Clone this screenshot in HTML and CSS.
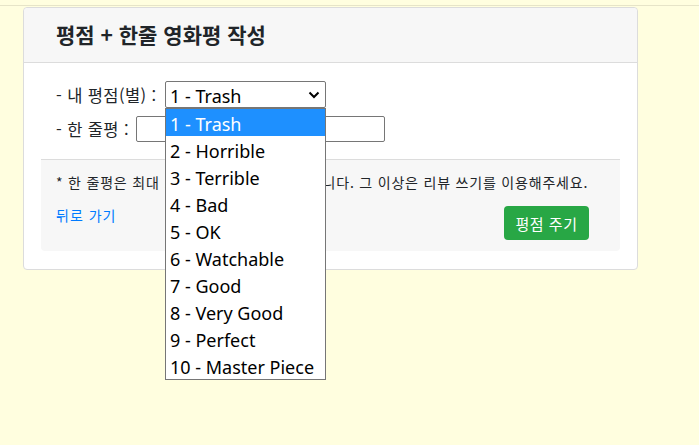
FILE: index.html
```html
<!DOCTYPE html>
<html lang="ko">
<head>
<meta charset="utf-8">
<link rel="stylesheet" href="styles.css">
</head>
<body>
<div class="topline"></div>
<div class="card">
  <div class="card-header">평점 + 한줄 영화평 작성</div>
  <div class="card-body">
    <div class="row">
      <span class="label label1">- 내 평점(별) :</span>
      <div class="select-wrap">
        <div class="select">
          <span>1 - Trash</span>
          <svg class="chev" width="12" height="8" viewBox="0 0 12 8"><path d="M1.5 1.5 L6 6 L10.5 1.5" fill="none" stroke="#000" stroke-width="2"/></svg>
        </div>
        <ul class="dropdown">
          <li class="active">1 - Trash</li>
          <li>2 - Horrible</li>
          <li>3 - Terrible</li>
          <li>4 - Bad</li>
          <li>5 - OK</li>
          <li>6 - Watchable</li>
          <li>7 - Good</li>
          <li>8 - Very Good</li>
          <li>9 - Perfect</li>
          <li>10 - Master Piece</li>
        </ul>
      </div>
    </div>
    <div class="row row2">
      <span class="label label2">- 한 줄평 :</span>
      <div class="input"></div>
    </div>
    <div class="footer">
      <p class="note">* 한 줄평은 최대 100자까지 작성이 가능합니다. 그 이상은 리뷰 쓰기를 이용해주세요.</p>
      <div class="actions">
        <a class="back" href="#">뒤로 가기</a>
        <button class="btn">평점 주기</button>
      </div>
    </div>
  </div>
</div>
</body>
</html>
```
FILE: styles.css
```css
html, body {
  margin: 0;
  padding: 0;
}
body {
  background: #fffedf;
  font-family: "Noto Sans CJK KR", "Noto Sans", sans-serif;
  color: #212529;
  width: 699px;
  height: 445px;
  overflow: hidden;
}
.topline {
  height: 5px;
  border-bottom: 1px solid #e6e4c8;
}
.card {
  margin: 1px 0 0 23px;
  width: 613px;
  background: #fff;
  border: 1px solid #dcdcdc;
  border-radius: 4px;
}
.card-header {
  height: 55px;
  box-sizing: border-box;
  background: #f7f7f7;
  border-bottom: 1px solid #dcdcdc;
  padding: 11px 0 0 32px;
  font-size: 21px;
  font-weight: 700;
  line-height: 30px;
  border-radius: 4px 4px 0 0;
}
.card-body {
  padding: 18px 17px 18px 17px;
}
.row {
  display: flex;
  align-items: center;
  padding-left: 15px;
  height: 27px;
}
.row2 {
  margin-top: 8px;
  height: 26px;
}
.label {
  font-size: 16.5px;
  line-height: 22px;
  letter-spacing: 0.4px;
}
.label1 {
  width: 109px;
}
.label2 {
  width: 80px;
}
.select-wrap {
  position: relative;
}
.select {
  width: 161px;
  height: 27px;
  box-sizing: border-box;
  border: 1px solid #767676;
  border-radius: 2px;
  display: flex;
  align-items: center;
  justify-content: space-between;
  padding: 2px 5px 0 4px;
  font-family: "Noto Sans", sans-serif;
  font-size: 18px;
  color: #000;
}
.chev {
  display: block;
  margin-top: -2px;
}
.dropdown {
  position: absolute;
  left: 0;
  top: 27px;
  width: 161px;
  box-sizing: border-box;
  margin: 0;
  padding: 0;
  list-style: none;
  background: #fff;
  border: 1px solid #767676;
  z-index: 10;
  font-family: "Noto Sans", sans-serif;
  font-size: 18px;
  color: #000;
}
.dropdown li {
  height: 27px;
  box-sizing: border-box;
  padding: 3px 0 0 4px;
  line-height: 24px;
}
.dropdown li.active {
  background: #1e90ff;
  color: #fff;
}
.input {
  width: 249px;
  height: 26px;
  box-sizing: border-box;
  border: 1px solid #767676;
  border-radius: 2px;
}
.footer {
  margin-top: 17px;
  background: #f7f7f7;
  border-top: 1px solid #dcdcdc;
  border-radius: 0 0 4px 4px;
  padding: 12px 31px 11px 15px;
}
.note {
  margin: 0;
  font-size: 14px;
  line-height: 20px;
  letter-spacing: 0.8px;
  white-space: nowrap;
}
.actions {
  display: flex;
  justify-content: space-between;
  align-items: flex-start;
  margin-top: 14px;
}
.back {
  color: #007bff;
  text-decoration: none;
  font-size: 14px;
  line-height: 18px;
  letter-spacing: 1px;
}
.btn {
  width: 85px;
  height: 34px;
  background: #28a745;
  border: none;
  border-radius: 4px;
  color: #fff;
  font-family: "Noto Sans CJK KR", sans-serif;
  font-size: 15px;
  letter-spacing: 0.5px;
  padding: 0;
}
```
